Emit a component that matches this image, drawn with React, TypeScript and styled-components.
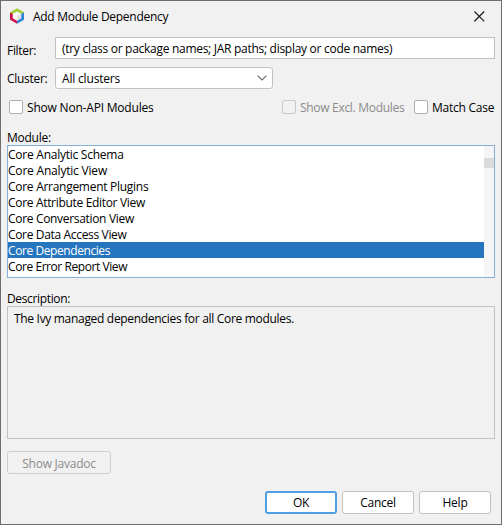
import React from "react";
import styled, { createGlobalStyle, css } from "styled-components";

const GlobalStyle = createGlobalStyle`
  *, *::before, *::after { box-sizing: border-box; }
  html, body { margin: 0; padding: 0; }
  body { overflow: hidden; }
`;

const Dialog = styled.main`
  width: 502px;
  height: 525px;
  border: 1px solid #6e6e6e;
  background: #f1f1f1;
  color: #000;
  font: 12px/16px "Open Sans", "Noto Sans", sans-serif;
  display: flex;
  flex-direction: column;
  white-space: nowrap;
`;

const Text = styled.span<{ $spacing?: number; $drop?: number }>`
  display: inline-block;
  letter-spacing: ${(p) => p.$spacing ?? -0.25}px;
  transform: translateY(${(p) => p.$drop ?? 1}px);
`;

const TitleBar = styled.header`
  height: 36px;
  padding: 0 16px 6px 8px;
  display: flex;
  align-items: center;
  gap: 8px;
  svg { flex: none; }
`;

const Title = styled(Text)`
  flex: 1;
`;

const FormRow = styled.div`
  height: 22px;
  margin-bottom: 8px;
  padding: 0 6px;
  display: grid;
  grid-template-columns: 48px 1fr;
  align-items: center;
`;

const fieldBox = css`
  height: 22px;
  border: 1px solid #c2c2c2;
  background: #fff;
  display: flex;
  align-items: center;
  padding: 0 6px;
`;

const TextField = styled.div`
  ${fieldBox}
`;

const ComboBox = styled.div`
  ${fieldBox}
  width: 218px;
  border-radius: 3px;
  justify-content: space-between;
  padding-right: 5px;
`;

const OptionsRow = styled.div`
  height: 16px;
  margin-top: 2px;
  padding: 0 6px 0 8px;
  display: flex;
  align-items: center;
`;

const Option = styled.label<{ $disabled?: boolean; $push?: boolean; $width: number }>`
  width: ${(p) => p.$width}px;
  margin-left: ${(p) => (p.$push ? "auto" : "0")};
  display: flex;
  align-items: center;
  gap: 4px;
  color: ${(p) => (p.$disabled ? "#8c8c8c" : "#000")};
`;

const Box = styled.span<{ $disabled?: boolean }>`
  width: 14px;
  height: 14px;
  flex: none;
  border: 1px solid ${(p) => (p.$disabled ? "#c8c8c8" : "#afafaf")};
  border-radius: 2px;
  background: ${(p) => (p.$disabled ? "#f1f1f1" : "#fff")};
`;

const SectionLabel = styled.div<{ $top: number }>`
  height: 16px;
  margin: ${(p) => p.$top}px 0 0 6px;
`;

const ListBox = styled.div`
  height: 133px;
  margin: 0 6px;
  border: 1px solid #87afda;
  background: #fff;
  display: flex;
`;

const Rows = styled.div`
  flex: 1;
`;

const Row = styled.div<{ $selected: boolean }>`
  height: 16px;
  color: ${(p) => (p.$selected ? "#fff" : "#000")};
  background: ${(p) => (p.$selected ? "#2675bf" : "transparent")};
`;

const ScrollTrack = styled.div`
  width: 10px;
  padding-top: 12px;
  background: #f5f5f5;
`;

const ScrollThumb = styled.div`
  height: 10px;
  background: #dbdbdb;
`;

const Description = styled.div`
  height: 133px;
  margin: 0 6px;
  padding: 3px 6px;
  border: 1px solid #c2c2c2;
`;

const Button = styled.button<{ $kind?: "default" | "disabled" }>`
  width: ${(p) => (p.$kind === "disabled" ? 104 : 72)}px;
  height: 23px;
  padding: 0;
  font: inherit;
  line-height: 16px;
  border: ${(p) => (p.$kind === "default" ? "2px solid #4f9ee3" : "1px solid #c2c2c2")};
  border-color: ${(p) => (p.$kind === "disabled" ? "#cecece" : "")};
  border-radius: 3px;
  background: ${(p) => (p.$kind === "disabled" ? "#f1f1f1" : "#fff")};
  color: ${(p) => (p.$kind === "disabled" ? "#8c8c8c" : "#000")};
`;

const JavadocRow = styled.div`
  height: 23px;
  margin: 12px 6px 0;
  display: flex;
`;

const Footer = styled.footer`
  margin: 17px 10px 0;
  display: flex;
  justify-content: flex-end;
  gap: 5px;
`;

const modules: { name: string; spacing?: number }[] = [
  { name: "Core Analytic Schema" },
  { name: "Core Analytic View", spacing: -0.2 },
  { name: "Core Arrangement Plugins", spacing: -0.28 },
  { name: "Core Attribute Editor View", spacing: -0.32 },
  { name: "Core Conversation View", spacing: -0.32 },
  { name: "Core Data Access View", spacing: -0.34 },
  { name: "Core Dependencies", spacing: -0.42 },
  { name: "Core Error Report View", spacing: -0.43 },
];

const AppIcon = () => (
  <svg width="16" height="16" viewBox="0 0 16 16">
    <path d="M8 .2 15 4.2V5.5L8 8 1 5.5V4.2Z" fill="#a5cd39" />
    <path d="M1 4.6 8 8V15.8L1 11.8Z" fill="#cf1748" />
    <path d="M15 4.6V11.8L8 15.8V8Z" fill="#2c86d8" />
    <path d="M8 3.4 12.2 5.7V10.3L8 12.7 3.8 10.3V5.7Z" fill="#fafafa" />
    <path d="M8 8 12.2 5.7V10.3L8 12.7Z" fill="#dfe1e2" />
  </svg>
);

const CloseIcon = () => (
  <svg width="11" height="11" viewBox="0 0 11 11">
    <path d="M.4.5 10.2 10.3M10.2.5.4 10.3" stroke="#1c1c1c" strokeWidth="1.2" />
  </svg>
);

const Chevron = () => (
  <svg width="10" height="6" viewBox="0 0 10 6">
    <path d="M.6.6 5 5 9.4.6" fill="none" stroke="#666" strokeWidth="1.1" />
  </svg>
);

export default function App() {
  return (
    <>
      <GlobalStyle />
      <Dialog>
        <TitleBar>
          <AppIcon />
          <Title $spacing={-0.28}>Add Module Dependency</Title>
          <CloseIcon />
        </TitleBar>
        <FormRow>
          <Text $drop={3} $spacing={-0.3}>Filter:</Text>
          <TextField>
            <Text $spacing={-0.285}>
              (try class or package names; JAR paths; display or code names)
            </Text>
          </TextField>
        </FormRow>
        <FormRow>
          <Text $spacing={-0.3}>Cluster:</Text>
          <ComboBox>
            <Text $spacing={-0.18}>All clusters</Text>
            <Chevron />
          </ComboBox>
        </FormRow>
        <OptionsRow>
          <Option $width={160}>
            <Box />
            <Text $spacing={-0.2}>Show Non-API Modules</Text>
          </Option>
          <Option $width={132} $disabled $push>
            <Box $disabled />
            <Text $spacing={-0.3}>Show Excl. Modules</Text>
          </Option>
          <Option $width={81}>
            <Box />
            <Text>Match Case</Text>
          </Option>
        </OptionsRow>
        <SectionLabel $top={14}>
          <Text>Module:</Text>
        </SectionLabel>
        <ListBox>
          <Rows>
            {modules.map((m) => (
              <Row key={m.name} $selected={m.name === "Core Dependencies"}>
                <Text $spacing={m.spacing}>{m.name}</Text>
              </Row>
            ))}
          </Rows>
          <ScrollTrack>
            <ScrollThumb />
          </ScrollTrack>
        </ListBox>
        <SectionLabel $top={12}>
          <Text $spacing={-0.35}>Description:</Text>
        </SectionLabel>
        <Description>
          <Text $spacing={-0.31}>The Ivy managed dependencies for all Core modules.</Text>
        </Description>
        <JavadocRow>
          <Button $kind="disabled" disabled>
            <Text>Show Javadoc</Text>
          </Button>
        </JavadocRow>
        <Footer>
          <Button $kind="default">
            <Text $drop={0}>OK</Text>
          </Button>
          <Button>
            <Text $drop={0}>Cancel</Text>
          </Button>
          <Button>
            <Text $drop={0}>Help</Text>
          </Button>
        </Footer>
      </Dialog>
    </>
  );
}
